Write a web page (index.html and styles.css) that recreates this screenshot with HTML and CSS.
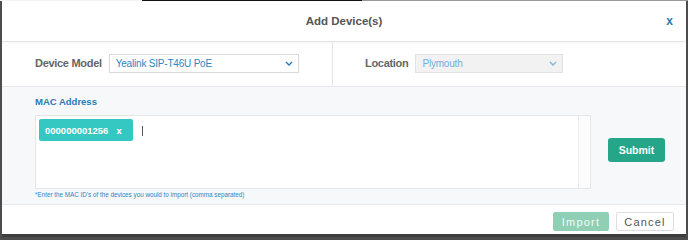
FILE: index.html
```html
<!DOCTYPE html>
<html>
<head>
<meta charset="utf-8">
<link rel="stylesheet" href="styles.css">
</head>
<body>
<div class="topstrip"><span class="ts-a"></span><span class="ts-b"></span><span class="ts-c"></span></div>
<div class="modal">
  <div class="header">
    <div class="title">Add Device(s)</div>
    <div class="close">x</div>
  </div>
  <div class="row">
    <div class="col col-left">
      <span class="label">Device Model</span>
      <div class="select">
        <span>Yealink SIP-T46U PoE</span>
        <svg class="chev" viewBox="0 0 8 5" width="8" height="5"><path d="M1 1 L4 4 L7 1" fill="none" stroke="#2a7ab8" stroke-width="1.4"/></svg>
      </div>
    </div>
    <div class="col col-right">
      <span class="label">Location</span>
      <div class="select disabled">
        <span>Plymouth</span>
        <svg class="chev" viewBox="0 0 8 5" width="8" height="5"><path d="M1 1 L4 4 L7 1" fill="none" stroke="#7fb6dc" stroke-width="1.4"/></svg>
      </div>
    </div>
  </div>
  <div class="band">
    <div class="mac-label">MAC Address</div>
    <div class="mac-row">
      <div class="mac-box">
        <div class="mac-input">
          <span class="tag">000000001256<span class="tag-x">x</span></span>
          <span class="cursor"></span>
        </div>
        <div class="scroll"></div>
      </div>
      <button class="submit">Submit</button>
    </div>
    <div class="hint">*Enter the MAC ID's of the devices you would to import (comma separated)</div>
  </div>
  <div class="footer">
    <button class="btn import">Import</button>
    <button class="btn cancel">Cancel</button>
  </div>
</div>
</body>
</html>
```
FILE: styles.css
```css
html, body {
  margin: 0;
  padding: 0;
}
body {
  width: 688px;
  height: 240px;
  background: #4d4d4d;
  font-family: "Liberation Sans", Arial, sans-serif;
  overflow: hidden;
}
.topstrip {
  display: flex;
  height: 1px;
}
.ts-a { width: 142px; background: #f4f4f4; }
.ts-b { width: 220px; background: #111; }
.ts-c { flex: 1; background: #9a9a9a; }
.modal {
  margin: 0 2px 0 2px;
  height: 236px;
  background: #fff;
  display: flex;
  flex-direction: column;
}
.header {
  height: 40px;
  display: flex;
  align-items: center;
  justify-content: center;
  position: relative;
  border-bottom: 1px solid #e4e4e4;
  box-shadow: 0 1px 2px rgba(0,0,0,0.04);
  border-bottom-right-radius: 3px;
}
.title {
  font-size: 11.5px;
  font-weight: bold;
  color: #555;
}
.close {
  position: absolute;
  right: 13px;
  top: 13px;
  font-size: 12px;
  font-weight: bold;
  color: #2a7ab8;
}
.row {
  height: 44px;
  display: flex;
}
.col {
  display: flex;
  align-items: center;
}
.col-left {
  width: 331px;
  border-right: 1px solid #e6e6e6;
  padding-left: 33px;
  box-sizing: border-box;
}
.col-right {
  padding-left: 32px;
}
.label {
  font-size: 11px;
  color: #666;
  font-weight: bold;
  letter-spacing: -0.3px;
  margin-right: 7px;
  margin-top: -3px;
}
.select {
  width: 190px;
  height: 19px;
  margin-top: -1px;
  box-sizing: border-box;
  border: 1px solid #d9d9d9;
  background: #fff;
  display: flex;
  align-items: center;
  justify-content: space-between;
  padding: 0 5px 0 6px;
  font-size: 10px;
  color: #2a86c4;
  letter-spacing: -0.2px;
}
.select.disabled {
  width: 148px;
  background: #f2f2f2;
  border-color: #e2e2e2;
  color: #6fb0de;
}
.band {
  height: 119px;
  background: #f7f8fa;
  border-top: 1px solid #e6e7ea;
  border-bottom: 1px solid #e8e9ec;
  box-sizing: border-box;
  padding: 9px 0 0 33px;
  display: flex;
  flex-direction: column;
}
.mac-label {
  font-size: 9.5px;
  font-weight: bold;
  color: #2a7ab8;
  height: 19px;
}
.mac-row {
  display: flex;
  align-items: center;
}
.mac-box {
  width: 556px;
  height: 74px;
  box-sizing: border-box;
  border: 1px solid #e6e6e6;
  background: #fff;
  display: flex;
}
.mac-input {
  flex: 1;
  padding: 3px 0 0 3px;
  display: flex;
  align-items: flex-start;
}
.tag {
  background: #35c7c2;
  color: #fff;
  font-size: 9.5px;
  font-weight: bold;
  height: 22px;
  width: 94px;
  box-sizing: border-box;
  border-radius: 2px;
  display: flex;
  align-items: center;
  padding-left: 6px;
}
.tag-x {
  margin-left: 8px;
}
.cursor {
  width: 1px;
  height: 10px;
  background: #555;
  margin: 7px 0 0 9px;
}
.scroll {
  width: 11px;
  border-left: 1px solid #ececec;
  background: #fcfcfc;
}
.submit {
  margin-left: 17px;
  margin-top: -4px;
  width: 57px;
  height: 24px;
  border: none;
  border-radius: 3px;
  background: #25a688;
  color: #fff;
  font-family: "Liberation Sans", Arial, sans-serif;
  font-size: 10.5px;
  font-weight: bold;
  padding: 0;
}
.hint {
  font-size: 6.3px;
  color: #2a86c4;
  margin-top: 2px;
}
.footer {
  flex: 1;
  display: flex;
  justify-content: flex-end;
  align-items: flex-start;
  padding: 7px 12px 0 0;
  gap: 7px;
  border-bottom: 3px solid #3d3d3d;
}
.btn {
  height: 19px;
  border-radius: 2px;
  font-family: "Liberation Sans", Arial, sans-serif;
  font-size: 11px;
  letter-spacing: 1.2px;
  padding: 0;
}
.import {
  width: 56px;
  background: #8fcfb4;
  border: 1px solid #8fcfb4;
  color: #f4fbf8;
}
.cancel {
  width: 58px;
  background: #fff;
  border: 1px solid #dedede;
  color: #555;
}
```
